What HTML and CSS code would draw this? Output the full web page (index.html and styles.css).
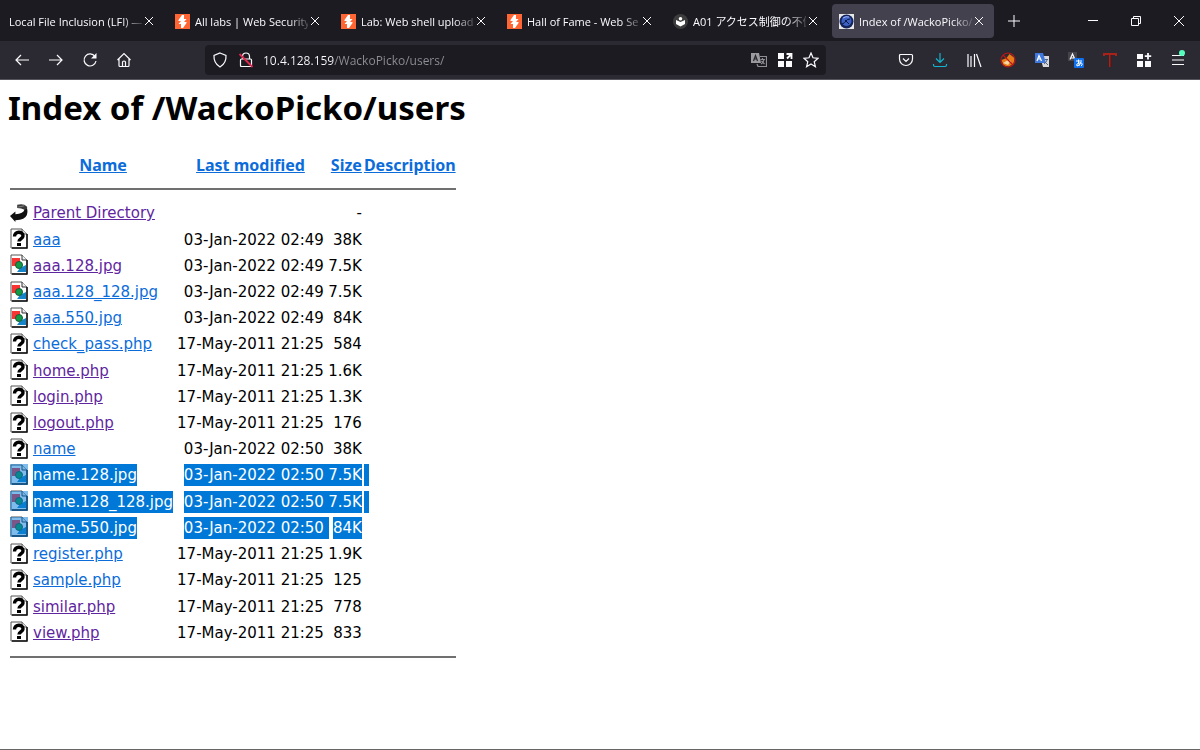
FILE: index.html
```html
<!DOCTYPE html>
<html lang="en">
<head>
    <meta charset="UTF-8">
    <meta name="viewport" content="width=device-width, initial-scale=1.0">
    <title>Index of /WackoPicko/users</title>
    <link rel="stylesheet" href="styles.css">
</head>
<body>

<!-- Shared icons -->
<svg class="sprites" aria-hidden="true">
    <symbol id="close" viewBox="0 0 10 10"><path d="M1 1l8 8M9 1L1 9" fill="none" stroke="currentColor"/></symbol>
    <symbol id="burp" viewBox="0 0 15 15">
        <path fill="#ff6633" d="M0 0h15v15H0z"/>
        <path fill="#fff" d="M7 1h2v4h2.500L9 8h2.500v1L8 14H6V10H3.500L6 7H3.500V6z"/>
    </symbol>
    <symbol id="unknown" viewBox="0 0 18 21">
        <path d="M1 1h11l5 5v14H1z" fill="#fff" stroke="#555"/>
        <path d="M12 1v5h5" fill="#ddd" stroke="#555"/>
        <path d="M17 6v14H2" fill="none" stroke="#111" stroke-width="1.500"/>
        <path d="M4.500 8.500c0-5.500 8.500-5.500 8.500-.500 0 3-4 2.500-4 5.500" fill="none" stroke="#000" stroke-width="3.400"/>
        <path d="M7 15h4v3H7z"/>
    </symbol>
    <symbol id="image" viewBox="0 0 18 21">
        <path d="M1 1h11l5 5v14H1z" fill="#fff" stroke="#555"/>
        <path d="M2 4h8v8H2z" fill="#f83434"/>
        <path d="M7 18l3-4 6-3v7z" fill="#1584c8"/>
        <circle cx="9" cy="11" r="3.500" fill="#129b46" stroke="#165a35"/>
        <path d="M12 1v5h5" fill="#eee" stroke="#333"/>
        <path d="M17 6v14H2" fill="none" stroke="#111" stroke-width="1.500"/>
    </symbol>
    <symbol id="back" viewBox="0 0 20 20">
        <path d="M8 1.500q7-2 11 2V11l-3-4q-3-2-8-2z" fill="#3a3a3a"/>
        <path d="M9 4l7-1.500" stroke="#888" fill="none"/>
        <path d="M0 14l6-5v3q9-1 10-5l3-1q2 10-8 12l-5 .500v2z" fill="#111"/>
    </symbol>
</svg>

<!-- Tab strip -->
<header class="tab-strip">
    <div class="tab">
        <button class="tab-title">Local File Inclusion (LFI) —</button>
        <button class="tab-close" aria-label="Close tab"><svg><use href="#close"/></svg></button>
    </div>
    <div class="tab">
        <svg class="favicon"><use href="#burp"/></svg>
        <button class="tab-title">All labs | Web Security</button>
        <button class="tab-close" aria-label="Close tab"><svg><use href="#close"/></svg></button>
    </div>
    <div class="tab">
        <svg class="favicon"><use href="#burp"/></svg>
        <button class="tab-title">Lab: Web shell upload</button>
        <button class="tab-close" aria-label="Close tab"><svg><use href="#close"/></svg></button>
    </div>
    <div class="tab">
        <svg class="favicon"><use href="#burp"/></svg>
        <button class="tab-title">Hall of Fame - Web Se</button>
        <button class="tab-close" aria-label="Close tab"><svg><use href="#close"/></svg></button>
    </div>
    <div class="tab">
        <svg class="favicon" viewBox="0 0 15 15">
            <circle cx="7.500" cy="7.500" r="7.500" fill="#3d3d3d"/>
            <circle cx="7.500" cy="4.800" r="1.800" fill="#fff"/>
            <path d="M3 6l4.500 2L12 6v4l-4.500 2.500L3 10z" fill="#fff"/>
        </svg>
        <button class="tab-title">A01 アクセス制御の不備</button>
        <button class="tab-close" aria-label="Close tab"><svg><use href="#close"/></svg></button>
    </div>
    <div class="tab active">
        <svg class="favicon" viewBox="0 0 15 15">
            <path fill="#e8e8e8" d="M0 0h15v15H0z"/>
            <circle cx="7.500" cy="7.500" r="7" fill="#14245c"/>
            <circle cx="7.500" cy="7" r="5" fill="#3e62c4"/>
            <path d="M3 10q3-1 4-3t4-2M6 6l4 4" stroke="#0d1840" fill="none"/>
            <path d="M4 4q3-2 6-1" stroke="#9db5f0" fill="none"/>
        </svg>
        <button class="tab-title">Index of /WackoPicko/</button>
        <button class="tab-close" aria-label="Close tab"><svg><use href="#close"/></svg></button>
    </div>
    <button class="new-tab" aria-label="New tab"><svg viewBox="0 0 12 12"><path d="M6 0v12M0 6h12"/></svg></button>
    <div class="window-controls">
        <button aria-label="Minimize"><svg viewBox="0 0 12 12"><path d="M1 5.500h10"/></svg></button>
        <button aria-label="Restore"><svg viewBox="0 0 12 12"><path d="M1.500 3.500h7v7h-7zM3.500 3.500v-2h7v7h-2"/></svg></button>
        <button aria-label="Close"><svg viewBox="0 0 12 12"><path d="M1 1l10 10M11 1L1 11"/></svg></button>
    </div>
</header>

<!-- Navigation toolbar -->
<nav class="toolbar">
    <button class="tool" aria-label="Back"><svg viewBox="0 0 16 16"><path d="M15 8H2M7 3L2 8l5 5"/></svg></button>
    <button class="tool" aria-label="Forward"><svg viewBox="0 0 16 16"><path d="M1 8h13M9 3l5 5-5 5"/></svg></button>
    <button class="tool" aria-label="Reload"><svg viewBox="0 0 16 16"><path d="M13 4.500A6 6 0 1 0 14 9"/><path class="solid" d="M14.500 1v5.500H9z"/></svg></button>
    <button class="tool" aria-label="Home"><svg viewBox="0 0 16 16"><path d="M1.500 8L8 1.500 14.500 8M3 7v6.500q0 1 1 1h8q1 0 1-1V7M6.500 14.500V10q0-1 1.500-1t1.500 1v4.500"/></svg></button>

    <div class="url-bar">
        <button class="url-icon" aria-label="Tracking protection"><svg viewBox="0 0 16 16"><path d="M8 1L14 3.500Q14.500 11 8 15 1.500 11 2 3.500z"/></svg></button>
        <button class="url-icon" aria-label="Connection is not secure"><svg viewBox="0 0 16 16"><path d="M4.500 7V4.500a3.500 3.500 0 0 1 7 0V7M3.500 7h9q1 0 1 1v5.500q0 1-1 1h-9q-1 0-1-1V8q0-1 1-1z"/><path d="M1.500 2l13 13" stroke="#e22850" stroke-width="1.800"/></svg></button>
        <input type="text" class="url" aria-label="Address" value="10.4.128.159/WackoPicko/users/">
        <button class="url-icon" aria-label="Translate page"><svg viewBox="0 0 16 16"><path d="M0 1h8l2 10H0z" fill="#9b9b9f" stroke="none"/><path d="M9 4.500h6.500v10H7L6 12" stroke="#8f8f94"/><path d="M2.500 9L4.500 3.500 6.500 9M3 7h3" stroke="#29282f"/><path d="M9.500 7.500h4.500M11.500 6v1.500M13 7.500q-.500 3-3 4.500M10.500 9l3 3" stroke="#8f8f94"/></svg></button>
        <button class="url-icon" aria-label="Open in container"><svg viewBox="0 0 16 16"><path class="solid" d="M1 1h6v6H1zM1 9h6v6H1zM9 9h6v6H9z"/><path d="M10 6.500L14 2.500M9.500 2h5v5" stroke-width="1.800"/></svg></button>
        <button class="url-icon" aria-label="Bookmark this page"><svg viewBox="0 0 16 16"><path d="M8 1l2 4.800 5 .500-3.800 3.400 1.200 5L8 12l-4.400 2.700 1.200-5L1 6.300l5-.500z"/></svg></button>
    </div>

    <button class="tool" aria-label="Save to Pocket"><svg viewBox="0 0 16 16"><path d="M2.500 2.500h11q1 0 1 1V7a6.500 6.500 0 0 1-13 0V3.500q0-1 1-1zM5 6.500L8 9.500l3-3"/></svg></button>
    <button class="tool download" aria-label="Downloads"><svg viewBox="0 0 16 16"><path d="M8 1v9M4 6.500l4 4 4-4M1.500 12v1q0 1.500 1.500 1.500h10q1.500 0 1.500-1.500v-1"/></svg></button>
    <button class="tool" aria-label="Library"><svg viewBox="0 0 16 16"><path d="M2 2v13M5 4v11M8.500 2v13M10.500 2l4.500 13"/></svg></button>
    <button class="tool" aria-label="FoxyProxy"><svg viewBox="0 0 16 16"><path d="M1.500 8l5-2 3-4 5 4-1 6-5 2.500-5-1z" fill="#e87c16" stroke="none"/><path d="M3 11l5-3 3 1-3 4z" fill="#f6d8a4" stroke="none"/><circle cx="8" cy="8" r="7" stroke="#bb1717"/><path d="M3 3l10 10" stroke="#bb1717"/></svg></button>
    <button class="tool" aria-label="Google Translate"><svg viewBox="0 0 16 16"><path d="M6 4h9v11H9z" fill="#d9d9dd" stroke="none"/><path d="M1 1h8l3 10H1z" fill="#3f78dc" stroke="none"/><path d="M3 9l2-5.500L7.500 9M4 7h3" stroke="#fff"/><path d="M11 7.500h3M13 8q-1 3-3 4M11 10l3 3" stroke="#54647c" stroke-width="1"/></svg></button>
    <button class="tool" aria-label="Translate web pages"><svg viewBox="0 0 16 16"><path d="M0 0h9v9H0z" fill="#45444b" stroke="none"/><path d="M2 7.500L4.500 2 7 7.500M3 6h3"/><rect x="6" y="6" width="10" height="10" rx="1" fill="#0f6fec" stroke="none"/><path d="M8 9h6M10.500 7.500q-.500 4 1 6M13 10q-1 4-4 4-1.500-2 2-3 4-.500 3 2l-1 1" stroke="#fff" stroke-width="1"/></svg></button>
    <button class="tool" aria-label="Tamper Data"><svg viewBox="0 0 16 16"><path d="M2 4V2h12v2M8 2v13" stroke="#a92219" stroke-width="2"/><path d="M9 3v12" stroke="#581512"/></svg></button>
    <button class="tool" aria-label="Extensions"><svg viewBox="0 0 16 16"><path class="solid" d="M1 2h6v5H1zM1 9h6v6H1zM9 9h6v6H9z"/><path d="M12 1v6.500M8.800 4.200h6.400" stroke-width="1.800"/></svg></button>
    <button class="tool menu" aria-label="Open application menu"><svg viewBox="0 0 16 16"><path d="M2 3.500h12M2 8h12M2 12.500h12"/></svg><span class="badge"></span></button>
</nav>

<!-- Directory listing -->
<main class="page">
    <h1>Index of /WackoPicko/users</h1>
    <table class="listing">
        <tr>
            <th class="icon"></th>
            <th class="name"><a href="#">Name</a></th>
            <th class="date"><a href="#">Last modified</a></th>
            <th class="size"><a href="#">Size</a></th>
            <th class="desc"><a href="#">Description</a></th>
        </tr>
        <tr class="rule"><td colspan="5"><hr></td></tr>
        <tr>
            <td class="icon"><svg><use href="#back"/></svg></td>
            <td><a class="visited" href="#">Parent Directory</a></td>
            <td class="date"></td><td class="size">-</td><td class="desc"></td>
        </tr>
        <tr>
            <td class="icon"><svg><use href="#unknown"/></svg></td>
            <td><a href="#">aaa</a></td>
            <td class="date">03-Jan-2022 02:49</td><td class="size">38K</td><td class="desc"></td>
        </tr>
        <tr>
            <td class="icon"><svg><use href="#image"/></svg></td>
            <td><a class="visited" href="#">aaa.128.jpg</a></td>
            <td class="date">03-Jan-2022 02:49</td><td class="size">7.5K</td><td class="desc"></td>
        </tr>
        <tr>
            <td class="icon"><svg><use href="#image"/></svg></td>
            <td><a href="#">aaa.128_128.jpg</a></td>
            <td class="date">03-Jan-2022 02:49</td><td class="size">7.5K</td><td class="desc"></td>
        </tr>
        <tr>
            <td class="icon"><svg><use href="#image"/></svg></td>
            <td><a href="#">aaa.550.jpg</a></td>
            <td class="date">03-Jan-2022 02:49</td><td class="size">84K</td><td class="desc"></td>
        </tr>
        <tr>
            <td class="icon"><svg><use href="#unknown"/></svg></td>
            <td><a href="#">check_pass.php</a></td>
            <td class="date">17-May-2011 21:25</td><td class="size">584</td><td class="desc"></td>
        </tr>
        <tr>
            <td class="icon"><svg><use href="#unknown"/></svg></td>
            <td><a class="visited" href="#">home.php</a></td>
            <td class="date">17-May-2011 21:25</td><td class="size">1.6K</td><td class="desc"></td>
        </tr>
        <tr>
            <td class="icon"><svg><use href="#unknown"/></svg></td>
            <td><a class="visited" href="#">login.php</a></td>
            <td class="date">17-May-2011 21:25</td><td class="size">1.3K</td><td class="desc"></td>
        </tr>
        <tr>
            <td class="icon"><svg><use href="#unknown"/></svg></td>
            <td><a class="visited" href="#">logout.php</a></td>
            <td class="date">17-May-2011 21:25</td><td class="size">176</td><td class="desc"></td>
        </tr>
        <tr>
            <td class="icon"><svg><use href="#unknown"/></svg></td>
            <td><a href="#">name</a></td>
            <td class="date">03-Jan-2022 02:50</td><td class="size">38K</td><td class="desc"></td>
        </tr>
        <tr class="selected">
            <td class="icon"><svg><use href="#image"/></svg></td>
            <td><a href="#">name.128.jpg</a></td>
            <td class="date"><span>03-Jan-2022 02:50</span></td><td class="size"><span>7.5K</span></td><td class="desc"><span>&nbsp;</span></td>
        </tr>
        <tr class="selected">
            <td class="icon"><svg><use href="#image"/></svg></td>
            <td><a href="#">name.128_128.jpg</a></td>
            <td class="date"><span>03-Jan-2022 02:50</span></td><td class="size"><span>7.5K</span></td><td class="desc"><span>&nbsp;</span></td>
        </tr>
        <tr class="selected">
            <td class="icon"><svg><use href="#image"/></svg></td>
            <td><a href="#">name.550.jpg</a></td>
            <td class="date"><span>03-Jan-2022 02:50</span></td><td class="size"><span>84K</span></td><td class="desc"></td>
        </tr>
        <tr>
            <td class="icon"><svg><use href="#unknown"/></svg></td>
            <td><a href="#">register.php</a></td>
            <td class="date">17-May-2011 21:25</td><td class="size">1.9K</td><td class="desc"></td>
        </tr>
        <tr>
            <td class="icon"><svg><use href="#unknown"/></svg></td>
            <td><a href="#">sample.php</a></td>
            <td class="date">17-May-2011 21:25</td><td class="size">125</td><td class="desc"></td>
        </tr>
        <tr>
            <td class="icon"><svg><use href="#unknown"/></svg></td>
            <td><a class="visited" href="#">similar.php</a></td>
            <td class="date">17-May-2011 21:25</td><td class="size">778</td><td class="desc"></td>
        </tr>
        <tr>
            <td class="icon"><svg><use href="#unknown"/></svg></td>
            <td><a class="visited" href="#">view.php</a></td>
            <td class="date">17-May-2011 21:25</td><td class="size">833</td><td class="desc"></td>
        </tr>
        <tr class="rule"><td colspan="5"><hr></td></tr>
    </table>
</main>

</body>
</html>
```
FILE: styles.css
```css
* {
    box-sizing: border-box;
}

body {
    margin: 0;
    min-height: 100vh;
    display: flex;
    flex-direction: column;
    background-color: #fff;
    border-bottom: 1px solid #666;
    font-family: "DejaVu Sans", sans-serif;
    font-size: 15px;
    color: #000;
}

.sprites {
    display: none;
}

button {
    display: flex;
    align-items: center;
    justify-content: center;
    padding: 0;
    border: none;
    background: none;
    color: #fbfbfe;
    font-family: "Open Sans", "Noto Sans CJK JP", sans-serif;
    font-size: 11px;
}

button svg {
    flex: none;
    fill: none;
    stroke: currentColor;
}

/* Tabs */
.tab-strip {
    display: flex;
    height: 41px;
    background-color: #1c1b22;
}

.tab {
    display: flex;
    align-items: center;
    flex: 0 1 162px;
    min-width: 0;
    height: 34px;
    margin: 4px 2px 3px;
    padding: 0 8px 0 7px;
    border-radius: 4px;
}

.tab.active {
    background-color: #42414d;
}

.favicon {
    flex: none;
    width: 15px;
    height: 15px;
    margin-right: 5px;
}

.tab-title {
    flex: 1;
    min-width: 0;
    justify-content: flex-start;
    overflow: hidden;
    white-space: nowrap;
    mask-image: linear-gradient(to left, rgba(0, 0, 0, 0.2), #000 20px);
}

.tab-close {
    flex: none;
    width: 14px;
    height: 16px;
}

.tab-close svg {
    width: 10px;
    height: 10px;
}

.new-tab {
    width: 36px;
}

.new-tab svg,
.window-controls svg {
    width: 12px;
    height: 12px;
}

.window-controls {
    display: flex;
    margin-left: auto;
}

.window-controls button {
    width: 43px;
}

/* Toolbar */
.toolbar {
    display: flex;
    align-items: center;
    height: 39px;
    padding: 0 5px;
    background-color: #2b2a33;
    border-bottom: 1px solid #55545c;
}

.tool {
    position: relative;
    flex: none;
    width: 34px;
    height: 30px;
}

.tool svg,
.url-icon svg {
    width: 16px;
    height: 16px;
    stroke-width: 1.2;
}

.solid {
    fill: currentColor;
    stroke: none;
}

.download {
    color: #12b5cf;
}

.badge {
    position: absolute;
    top: 5px;
    right: 10px;
    width: 6px;
    height: 6px;
    border-radius: 50%;
    background-color: #54ffbd;
}

.url-bar {
    display: flex;
    align-items: center;
    flex: 1;
    height: 30px;
    margin: 0 63px 0 64px;
    padding: 0 2px;
    border-radius: 4px;
    background-color: #1c1b22;
}

.url-icon {
    flex: none;
    width: 26px;
    height: 26px;
}

.url {
    flex: 1;
    min-width: 0;
    padding: 0 0 0 4px;
    border: none;
    outline: none;
    /* host stays bright, path is dimmed */
    background: linear-gradient(to right, #fbfbfe 75px, #8f8f96 75px);
    background-clip: text;
    color: transparent;
    font-family: "Open Sans", sans-serif;
    font-size: 12px;
}

/* Listing */
.page {
    padding: 0 8px;
}

h1 {
    margin: 6px 0 21px;
    font-family: "Noto Sans", sans-serif;
    font-size: 33px;
    line-height: 44px;
}

.listing {
    height: 518px;
    border-spacing: 2px;
}

.listing td,
.listing th {
    height: 24px;
    padding: 0 1px;
    line-height: 22px;
    white-space: nowrap;
}

.listing th {
    font-family: "Noto Sans", sans-serif;
    font-size: 16px;
}

.listing .rule td {
    height: 20px;
    padding: 0;
}

hr {
    height: 2px;
    margin: 0;
    border: none;
    background-color: #707070;
}

.listing .icon {
    position: relative;
    width: 20px;
    padding: 0 0 2px;
}

.icon svg {
    display: block;
    width: 18px;
    height: 21px;
}

.listing .name {
    width: 142px;
}

.listing .date {
    width: 148px;
    text-align: right;
}

.listing th.date {
    text-align: center;
}

.listing .size {
    width: 35px;
    padding: 0;
    text-align: right;
}

.listing .desc {
    width: 91px;
    padding: 0;
}

a {
    color: #0b6cda;
}

a.visited {
    color: #5f259f;
}

/* Selected rows */
.selected a,
.selected span {
    display: inline-block;
    background-color: #0078d7;
    color: #fff;
    text-decoration: none;
}

.selected .date span {
    margin-right: -5px;
    padding-right: 5px;
}

.selected .icon::after {
    content: "";
    position: absolute;
    inset: 1px 2px 3px 0;
    background-color: #0078d7;
    opacity: 0.5;
}
```
